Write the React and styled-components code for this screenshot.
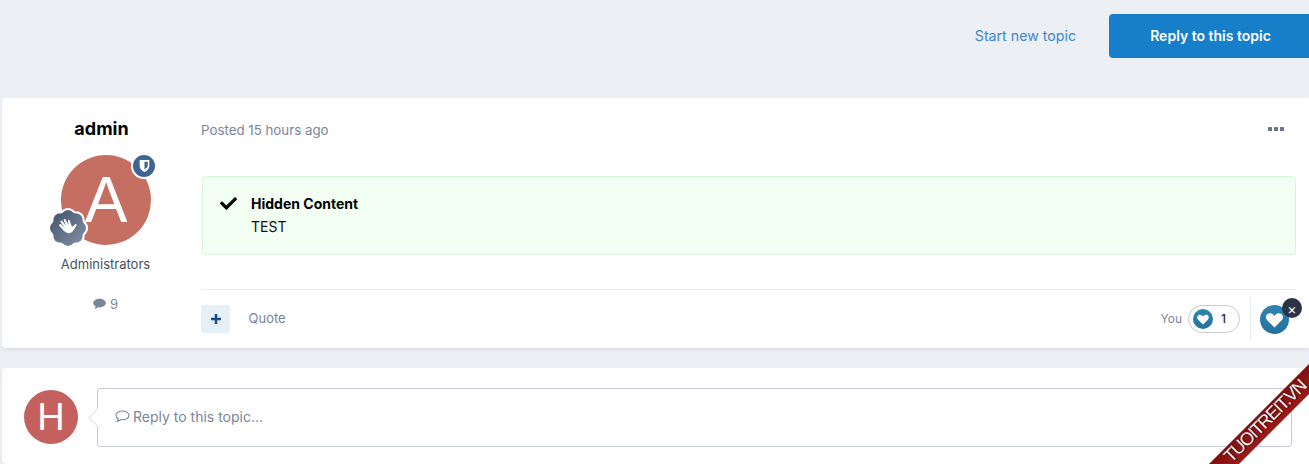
import React from "react";
import styled, { createGlobalStyle } from "styled-components";
import { FaCheck } from "react-icons/fa";

const Global = createGlobalStyle`
  html, body {
    margin: 0;
    padding: 0;
    background: #eceff4;
    font-family: Inter, "Noto Sans", sans-serif;
    overflow: hidden;
  }
`;

const Page = styled.div`
  position: relative;
  width: 1309px;
  height: 464px;
  overflow: hidden;
  padding-left: 2px;
  box-sizing: border-box;
`;

const TopBar = styled.div`
  height: 98px;
  display: flex;
  justify-content: flex-end;
  align-items: flex-start;
  padding-top: 14px;
  box-sizing: border-box;
`;

const StartLink = styled.a`
  color: #3d86cb;
  font-size: 14.2px;
  line-height: 44px;
  margin-right: 33px;
`;

const ReplyButton = styled.button`
  width: 200px;
  height: 44px;
  border: 0;
  padding: 0 0 2px 3px;
  border-radius: 4px 0 0 4px;
  background: #177ec9;
  color: #fff;
  font: 600 14px Inter, sans-serif;
`;

const Card = styled.div`
  background: #fff;
  border-radius: 4px 0 0 4px;
  box-shadow: 0 2px 4px -1px rgba(0, 0, 0, 0.1);
`;

const PostCard = styled(Card)`
  display: flex;
  height: 250px;
  margin-bottom: 20px;
`;

const Author = styled.div`
  width: 199px;
  flex: none;
  display: flex;
  flex-direction: column;
  align-items: center;
  padding-top: 20px;
  box-sizing: border-box;
`;

const AuthorName = styled.div`
  font-size: 18px;
  font-weight: 700;
  line-height: 22px;
  color: #000;
`;

const AvatarWrap = styled.div`
  position: relative;
  width: 90px;
  height: 90px;
  margin: 15px 0 0 9px;
`;

const LetterAvatar = styled.div`
  width: ${(p) => p.$size}px;
  height: ${(p) => p.$size}px;
  flex: none;
  border-radius: 50%;
  background: ${(p) => p.$bg};
  color: #fff;
  font-size: ${(p) => p.$font}px;
  font-family: "Liberation Sans", Arial, sans-serif;
  display: flex;
  align-items: center;
  justify-content: center;
`;

const ModBadge = styled.div`
  position: absolute;
  top: -2px;
  right: -6px;
  width: 26px;
  height: 26px;
  box-sizing: border-box;
  border-radius: 50%;
  border: 2px solid #fff;
  background: #3d6594;
  display: flex;
  align-items: center;
  justify-content: center;
`;

const RankBadge = styled.svg`
  position: absolute;
  left: -13px;
  bottom: -3px;
  overflow: visible;
`;

const GroupName = styled.div`
  font-size: 13px;
  line-height: 20px;
  color: #434f60;
  margin: 9px 0 0 8px;
`;

const PostCount = styled.div`
  display: flex;
  align-items: center;
  gap: 4px;
  font-size: 13px;
  line-height: 20px;
  color: #7b8599;
  margin: 20px 0 0 8px;
`;

const Body = styled.div`
  flex: 1;
  min-width: 0;
  padding-right: 13px;
  display: flex;
  flex-direction: column;
`;

const PostHead = styled.div`
  height: 78px;
  padding-top: 22px;
  box-sizing: border-box;
  display: flex;
  justify-content: space-between;
  font-size: 13.3px;
  line-height: 20px;
  color: #7b8599;
`;

const Dots = styled.div`
  display: flex;
  gap: 2px;
  padding: 7px 12px 0 0;
  i {
    display: block;
    width: 4px;
    height: 4px;
    border-radius: 0.5px;
    background: #6b7488;
  }
`;

const Hidden = styled.div`
  height: 80px;
  margin-left: 1px;
  box-sizing: border-box;
  background: #f3fff3;
  border: 1px solid #d9f5d9;
  border-radius: 4px;
  display: flex;
  padding: 16px 0 0 17px;
`;

const CheckIcon = styled(FaCheck)`
  width: 17px;
  height: 17px;
  margin: 2px 14px 0 0;
  flex: none;
  color: #000;
`;

const HiddenTitle = styled.div`
  font-size: 14px;
  font-weight: 700;
  line-height: 21px;
  color: #000;
`;

const HiddenText = styled.div`
  font-size: 14px;
  line-height: 25px;
  color: #111;
`;

const Actions = styled.div`
  margin-top: 34px;
  border-top: 1px solid #e9ebef;
  height: 58px;
  display: flex;
  align-items: center;
`;

const PlusButton = styled.div`
  width: 29px;
  height: 28px;
  margin-right: 18.5px;
  border-radius: 3px;
  background: #e6f0f9;
  color: #1b4e87;
  display: flex;
  align-items: center;
  justify-content: center;
`;

const Quote = styled.span`
  font-size: 13px;
  color: #7b8599;
  margin-top: -3px;
`;

const Reactions = styled.div`
  margin-left: auto;
  display: flex;
  align-items: center;
  height: 42px;
`;

const You = styled.span`
  font-size: 12px;
  color: #7b8599;
  margin-right: 6px;
  margin-top: -1px;
`;

const Pill = styled.div`
  width: 52px;
  height: 28px;
  box-sizing: border-box;
  border: 1px solid #c5cbd8;
  border-radius: 14px;
  display: flex;
  align-items: center;
  padding-left: 4px;
  gap: 8px;
  font-size: 12px;
  font-weight: 500;
  color: #1f2937;
  margin-top: -1px;
`;

const ReactBox = styled.div`
  position: relative;
  height: 42px;
  margin-left: 10px;
  padding: 7px 7px 0 9px;
  box-sizing: border-box;
  border-left: 1px solid #e9ebef;
`;

const RemoveBadge = styled.div`
  position: absolute;
  top: 0;
  right: -6px;
  width: 20px;
  height: 20px;
  border-radius: 50%;
  background: #2b3446;
  color: #fff;
  font-size: 14px;
  display: flex;
  align-items: center;
  justify-content: center;
`;

const ReplyCard = styled(Card)`
  height: 96px;
  display: flex;
  padding: 20px 17px 0 22px;
  box-sizing: border-box;
`;

const AvatarCol = styled.div`
  padding-top: 2px;
`;

const Editor = styled.div`
  position: relative;
  flex: 1;
  height: 59px;
  margin-left: 19px;
  box-sizing: border-box;
  border: 1px solid #c5cbd8;
  border-radius: 3px;
  background: #fff;
  display: flex;
  align-items: center;
  gap: 3px;
  padding: 0 0 2px 17px;
  color: #7b8599;
  font-size: 14px;
  &::before {
    content: "";
    position: absolute;
    left: -7px;
    top: 22px;
    width: 12px;
    height: 12px;
    background: #fff;
    border-left: 1px solid #dde0e6;
    border-bottom: 1px solid #dde0e6;
    transform: rotate(45deg);
  }
`;

const Ribbon = styled.div`
  position: absolute;
  right: 0;
  bottom: 0;
  width: 100px;
  height: 100px;
  pointer-events: none;
  background: linear-gradient(135deg, #7f0f0f 50%, #9c1a1a 65%);
  clip-path: polygon(100% 0, 100% 30%, 30% 100%, 0 100%);
`;

const RibbonText = styled.div`
  position: absolute;
  left: 55.5px;
  top: 56.5px;
  color: #eef0f0;
  font: 18px/16px "Liberation Sans", Arial, sans-serif;
  letter-spacing: -1.3px;
  white-space: nowrap;
  transform: translate(-50%, -50%) rotate(-45deg);
  text-shadow: 1px 1px 1px #3a0505;
`;

const HEART = "M12 20.5 4.6 13.2C2.4 11 2.6 7.6 5 6.1c1.9-1.2 4.400-.8 5.900.9L12 8.300l1.100-1.300c1.500-1.700 4-2.100 5.900-.9 2.400 1.500 2.600 4.900.4 7.100z";

// eight rounded lobes round the rank badge
const rankOutline = () => {
  const cx = 20;
  const cy = 20;
  const n = 8;
  let d = "";
  for (let i = 0; i < n; i++) {
    const a0 = ((i - 0.5) * 2 * Math.PI) / n - Math.PI / 2;
    const a1 = (i * 2 * Math.PI) / n - Math.PI / 2;
    const a2 = ((i + 0.5) * 2 * Math.PI) / n - Math.PI / 2;
    const pt = (a, r) => `${(cx + r * Math.cos(a)).toFixed(2)} ${(cy + r * Math.sin(a)).toFixed(2)}`;
    if (i === 0) d += `M${pt(a0, 17)}`;
    d += `Q${pt(a1, 22.5)} ${pt(a2, 17)}`;
  }
  return d + "z";
};

const HeartIcon = ({ size }) => (
  <svg width={size} height={size} viewBox="0 0 30 30">
    <defs>
      <linearGradient id="heartBg" x1="0" y1="0" x2="0" y2="1">
        <stop offset="0" stopColor="#2f86b0" />
        <stop offset="1" stopColor="#24719f" />
      </linearGradient>
    </defs>
    <circle cx="15" cy="15" r="15" fill="url(#heartBg)" />
    <path d={HEART} transform="translate(3.2 3.2) scale(0.98)" fill="#fff" />
  </svg>
);

export default function App() {
  return (
    <Page>
      <Global />
      <TopBar>
        <StartLink>Start new topic</StartLink>
        <ReplyButton>Reply to this topic</ReplyButton>
      </TopBar>

      <PostCard>
        <Author>
          <AuthorName>admin</AuthorName>
          <AvatarWrap>
            <LetterAvatar $size={90} $bg="#c46f61" $font={64}>A</LetterAvatar>
            <ModBadge>
              <svg width="13" height="14" viewBox="0 0 12 13">
                <path d="M1.500 1h9v5.500c0 2.600-2 4.400-4.500 5.500C3.500 10.900 1.500 9.100 1.500 6.500z" fill="#fff" />
                <path d="M6 2.500h3v3.800c0 1.300-1.400 2.400-3 3.300z" fill="#3d6594" />
              </svg>
            </ModBadge>
            <RankBadge width="40" height="40" viewBox="0 0 40 40">
              <defs>
                <linearGradient id="rankBg" x1="0" y1="0" x2="1" y2="1">
                  <stop offset="0" stopColor="#3f4e66" />
                  <stop offset="1" stopColor="#8896ac" />
                </linearGradient>
              </defs>
              <path d={rankOutline()} fill="url(#rankBg)" stroke="#fff" strokeWidth="2" strokeLinejoin="round" />
              <path
                d="M11.500 17.500c-.7-1 .6-2.100 1.500-1.300l3.400 3.200-3.800-5.400c-.7-1 .7-2.100 1.600-1.100l4 5-2.500-5.700c-.5-1.100 1-1.800 1.700-.8l3.400 5.600-.9-4c-.2-1.100 1.200-1.600 1.700-.6l1.700 4.600c.6 1.500 1 2.200 2.200.9l1.600-1.600c.9-.8 2 .2 1.400 1.200l-3.200 5c-1.800 2.900-5.300 3.500-7.900 1.600-1.600-1.100-4.200-4.200-6.400-6.600z"
                fill="#fff"
              />
            </RankBadge>
          </AvatarWrap>
          <GroupName>Administrators</GroupName>
          <PostCount>
            <svg width="13" height="12" viewBox="0 0 13 12">
              <path d="M6.500.8C3 .8.200 2.700.200 5.100c0 1.400 1 2.700 2.500 3.500-.2.900-.7 1.600-1.300 2.300 1.300-.1 2.600-.7 3.600-1.600.5.100 1 .1 1.500.1 3.500 0 6.300-1.900 6.300-4.300S10 .8 6.500.8z" fill="#7b8599" />
            </svg>
            9
          </PostCount>
        </Author>

        <Body>
          <PostHead>
            <span>Posted 15 hours ago</span>
            <Dots><i /><i /><i /></Dots>
          </PostHead>
          <Hidden>
            <CheckIcon />
            <div>
              <HiddenTitle>Hidden Content</HiddenTitle>
              <HiddenText>TEST</HiddenText>
            </div>
          </Hidden>
          <Actions>
            <PlusButton>
              <svg width="10" height="10" viewBox="0 0 10 10">
                <path d="M5 0v10M0 5h10" stroke="#1b4e87" strokeWidth="2.6" />
              </svg>
            </PlusButton>
            <Quote>Quote</Quote>
            <Reactions>
              <You>You</You>
              <Pill>
                <HeartIcon size={20} />
                1
              </Pill>
              <ReactBox>
                <HeartIcon size={29} />
                <RemoveBadge>×</RemoveBadge>
              </ReactBox>
            </Reactions>
          </Actions>
        </Body>
      </PostCard>

      <ReplyCard>
        <AvatarCol>
          <LetterAvatar $size={54} $bg="#c4605e" $font={38}>H</LetterAvatar>
        </AvatarCol>
        <Editor>
          <svg width="15" height="13" viewBox="0 0 15 13">
            <path d="M7.500 1C3.900 1 1 3 1 5.500c0 1.400.9 2.600 2.400 3.400-.1.900-.6 1.700-1.200 2.400 1.400-.2 2.600-.8 3.600-1.700.5.100 1.100.2 1.700.2 3.600 0 6.500-2 6.500-4.300S11.100 1 7.500 1z" fill="none" stroke="#7b8599" strokeWidth="1.1" />
          </svg>
          Reply to this topic...
        </Editor>
      </ReplyCard>

      <Ribbon>
        <RibbonText>TUOITREIT.VN</RibbonText>
      </Ribbon>
    </Page>
  );
}
